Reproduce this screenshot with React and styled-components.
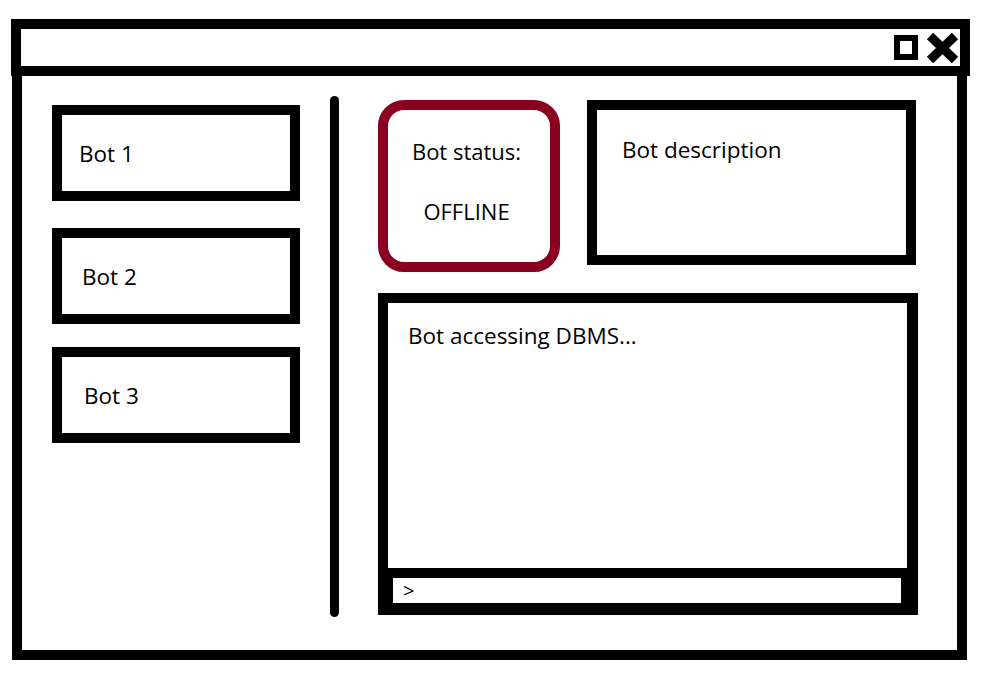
import React from "react";
import styled, { createGlobalStyle } from "styled-components";

const GlobalStyle = createGlobalStyle`
  body {
    margin: 0;
    background: #ffffff;
    font-family: "Open Sans", "Noto Sans", sans-serif;
    color: #000;
  }
  * { box-sizing: border-box; }
`;

const bots = [
  { name: "Bot 1", indent: 17, top: 29 },
  { name: "Bot 2", indent: 20, top: 27 },
  { name: "Bot 3", indent: 22, top: 23 },
];

export default function App() {
  return (
    <>
      <GlobalStyle />
      <Window>
        <TitleBar>
          <MaxIcon />
          <CloseIcon viewBox="0 0 33 32">
            <line x1="4" y1="4" x2="29" y2="28" />
            <line x1="29" y1="4" x2="4" y2="28" />
          </CloseIcon>
        </TitleBar>
        <Body>
          <Sidebar>
            {bots.map((bot) => (
              <BotCard key={bot.name} $indent={bot.indent} $top={bot.top}>
                {bot.name}
              </BotCard>
            ))}
          </Sidebar>
          <Divider />
          <Main>
            <TopRow>
              <StatusBox>
                <StatusLabel>Bot status:</StatusLabel>
                <StatusValue>OFFLINE</StatusValue>
              </StatusBox>
              <Description>Bot description</Description>
            </TopRow>
            <Console>
              <Log>Bot accessing DBMS...</Log>
              <InputRow>
                <Prompt>&gt;</Prompt>
              </InputRow>
            </Console>
          </Main>
        </Body>
      </Window>
    </>
  );
}

const Window = styled.div`
  display: flex;
  flex-direction: column;
  width: 959px;
  margin: 19px 0 0 11px;
`;

const TitleBar = styled.div`
  height: 57px;
  border: 10px solid #000;
  display: flex;
  justify-content: flex-end;
  align-items: center;
  gap: 8px;
  padding-right: 1px;
`;

const MaxIcon = styled.div`
  width: 24px;
  height: 25px;
  border: 6px solid #000;
`;

const CloseIcon = styled.svg`
  width: 33px;
  height: 32px;
  stroke: #000;
  stroke-width: 9;
`;

const Body = styled.div`
  height: 584px;
  margin: 0 3px 0 1px;
  border: 10px solid #000;
  border-top: none;
  display: flex;
  align-items: flex-start;
  padding-left: 30px;
`;

const Sidebar = styled.div`
  width: 248px;
  display: flex;
  flex-direction: column;
`;

const BotCard = styled.div`
  height: 96px;
  margin-top: ${(p) => p.$top}px;
  border: 10px solid #000;
  display: flex;
  align-items: center;
  padding-left: ${(p) => p.$indent}px;
  font-size: 22.5px;
`;

const Divider = styled.div`
  width: 9px;
  height: 521px;
  margin: 20px 0 0 30px;
  background: #000;
  border-radius: 5px;
`;

const Main = styled.div`
  margin: 24px 0 0 39px;
  display: flex;
  flex-direction: column;
`;

const TopRow = styled.div`
  display: flex;
  align-items: flex-start;
  gap: 27px;
`;

const StatusBox = styled.div`
  width: 182px;
  height: 172px;
  border: 10px solid #8a0020;
  border-radius: 26px;
  display: flex;
  flex-direction: column;
  align-items: center;
  padding: 26px 5px 0 0;
  font-size: 22px;
`;

const StatusLabel = styled.div`
  line-height: 30px;
`;

const StatusValue = styled.div`
  line-height: 30px;
  margin-top: 30px;
`;

const Description = styled.div`
  width: 329px;
  height: 165px;
  border: 10px solid #000;
  padding: 25px 0 0 25px;
  line-height: 30px;
  font-size: 22.5px;
`;

const Console = styled.div`
  width: 540px;
  height: 322px;
  margin-top: 21px;
  border: 10px solid #000;
  border-right-width: 11px;
  display: flex;
  flex-direction: column;
`;

const Log = styled.div`
  flex: 1;
  padding: 18px 0 0 20px;
  line-height: 30px;
  font-size: 22.5px;
`;

const InputRow = styled.div`
  background: #000;
  padding: 10px 6px 2px 5px;
`;

const Prompt = styled.div`
  height: 25px;
  background: #fff;
  padding-left: 10px;
  font-size: 20px;
  line-height: 25px;
`;
